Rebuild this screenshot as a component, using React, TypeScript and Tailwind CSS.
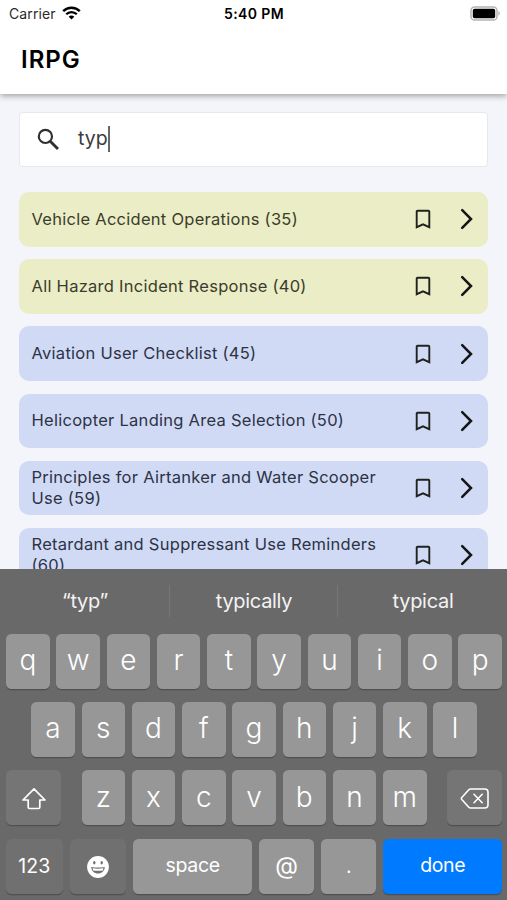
import type { ReactNode } from "react";

type Item = { title: string; tone: string; ink: string };

const GREEN = "bg-[#eaedc6]";
const BLUE = "bg-[#d1daf5]";

const items: Item[] = [
  { title: "Vehicle Accident Operations (35)", tone: GREEN, ink: "text-[#3b3c2b]" },
  { title: "All Hazard Incident Response (40)", tone: GREEN, ink: "text-[#3b3c2b]" },
  { title: "Aviation User Checklist (45)", tone: BLUE, ink: "text-[#2c3345]" },
  { title: "Helicopter Landing Area Selection (50)", tone: BLUE, ink: "text-[#2c3345]" },
  { title: "Principles for Airtanker and Water Scooper Use (59)", tone: BLUE, ink: "text-[#2c3345]" },
  { title: "Retardant and Suppressant Use Reminders (60)", tone: BLUE, ink: "text-[#2c3345]" },
];

function StatusBar() {
  return (
    <div className="grid h-7 grid-cols-3 items-center pl-[9px] pr-[6px] text-[14px] leading-none text-black">
      <div className="flex items-center gap-[6px]">
        <span className="tracking-[0.1px] text-[#2a2a2a]">Carrier</span>
        <svg width="19" height="14" viewBox="0 0 19 14" className="-mt-[2px]">
          <path d="M1.2 5.2a11.7 11.7 0 0 1 16.6 0" fill="none" stroke="#000" strokeWidth="2.5" />
          <path d="M4.2 8.3a7.5 7.5 0 0 1 10.6 0" fill="none" stroke="#000" strokeWidth="2.3" />
          <path d="M6.7 10.7a3.9 3.9 0 0 1 5.6 0L9.5 13.5z" fill="#000" />
        </svg>
      </div>
      <span className="-ml-[2px] text-center text-[14px] font-semibold tracking-[0.4px] whitespace-nowrap">5:40 PM</span>
      <svg width="31" height="15" viewBox="0 0 31 15" className="-mt-[2px] justify-self-end">
        <rect x="1" y="1" width="26" height="13" rx="3.6" fill="#fff" stroke="#b3b3b3" strokeWidth="1.5" />
        <rect x="2.8" y="2.8" width="22.4" height="9.4" rx="1.8" fill="#000" />
        <path d="M28.4 5.3c1.9.6 1.9 3.8 0 4.4z" fill="#b3b3b3" />
      </svg>
    </div>
  );
}

function Card({ item }: { item: Item }) {
  return (
    <div className={`flex h-[54.5px] shrink-0 items-center rounded-[10px] pl-[12.5px] ${item.tone}`}>
      <p className={`-mt-px w-[370px] text-[16.5px] leading-[20.5px] tracking-[0.27px] ${item.ink}`}>{item.title}</p>
      <svg width="16" height="20" viewBox="0 0 16 20" className="ml-[13px] shrink-0">
        <path d="M2.6 1.7h10.8q.9 0 .9.9v15.600L8 15.400l-6.300 2.800V2.600q0-.9.900-.9z" fill="none" stroke="#20221f" strokeWidth="1.900" />
      </svg>
      <svg width="14" height="22" viewBox="0 0 14 22" className="ml-[29px] shrink-0">
        <path d="M2.200 2.200 11 11l-8.800 8.800" fill="none" stroke="#151515" strokeWidth="2.500" strokeLinecap="round" strokeLinejoin="miter" />
      </svg>
    </div>
  );
}

function Key({ children, className = "w-[43.5px] bg-[#979797]" }: { children: ReactNode; className?: string }) {
  return (
    <div className={`flex h-[55px] shrink-0 items-center justify-center rounded-[5.5px] text-white shadow-[0_1.3px_0_#505050] ${className}`}>
      {children}
    </div>
  );
}

function Letters({ row }: { row: string }) {
  return (
    <div className="flex gap-[6.75px]">
      {row.split("").map((letter) => (
        <Key key={letter}>
          <span className="-mt-[2px] text-[28px] leading-none font-light">{letter}</span>
        </Key>
      ))}
    </div>
  );
}

function Keyboard() {
  return (
    <div className="h-[331px] shrink-0 bg-[#696969] text-white">
      <div className="grid h-[64.5px] grid-cols-3 items-center text-center text-[20px] tracking-[-0.3px] text-[#f3f3f3]">
        <span className="pl-px">“typ”</span>
        <span className="border-x border-[#777777] py-px pl-px">typically</span>
        <span className="pl-px">typical</span>
      </div>
      <div className="flex flex-col gap-[13.4px] pl-[6px] pr-[5px]">
        <div className="flex justify-center">
          <Letters row="qwertyuiop" />
        </div>
        <div className="flex justify-center">
          <Letters row="asdfghjkl" />
        </div>
        <div className="flex justify-between">
          <Key className="w-[55px] bg-[#757575]">
            <svg width="26" height="24" viewBox="0 0 26 24" className="mt-[3px]">
              <path d="M13 1.8 24 13h-5.2v7.2q0 1.3-1.3 1.3h-9q-1.3 0-1.3-1.3V13H2z" fill="none" stroke="#fff" strokeWidth="1.7" strokeLinejoin="round" />
            </svg>
          </Key>
          <Letters row="zxcvbnm" />
          <Key className="w-[55px] bg-[#757575]">
            <svg width="30" height="24" viewBox="0 0 30 24" className="mt-[3px]">
              <path d="M10.5 2h14.2q3.3 0 3.3 3.3v12.4q0 3.3-3.3 3.3H10.5q-1 0-1.7-.7L1.8 12.6q-.9-1.1 0-2.2L8.8 2.7Q9.5 2 10.5 2z" fill="none" stroke="#fff" strokeWidth="1.6" />
              <path d="m14 7.3 8.2 8.4m0-8.4L14 15.7" stroke="#fff" strokeWidth="1.6" strokeLinecap="round" />
            </svg>
          </Key>
        </div>
        <div className="flex justify-between text-[19.5px]">
          <Key className="w-[56.5px] bg-[#707070]">
            <span className="mt-px">123</span>
          </Key>
          <Key className="w-[56.5px] bg-[#707070]">
            <svg width="24" height="24" viewBox="0 0 24 24" className="mt-px">
              <circle cx="12" cy="12" r="10.9" fill="#fff" />
              <ellipse cx="8.3" cy="7.8" rx="1.2" ry="1.8" fill="#707070" />
              <ellipse cx="15.7" cy="7.8" rx="1.2" ry="1.8" fill="#707070" />
              <path d="M5.2 12q6.8 1.2 13.6 0c-.2 4-3 6.5-6.8 6.5S5.4 16 5.2 12z" fill="#707070" />
              <path d="M6.5 13.3q5.5.9 11 0l-.6 2.100q-4.900.8-9.800 0z" fill="#fff" />
            </svg>
          </Key>
          <Key className="w-[118.5px] bg-[#979797]">
            <span className="-mt-[2px] tracking-[-0.3px]">space</span>
          </Key>
          <Key className="w-[55px] bg-[#979797]">
            <span className="-mt-px text-[23.5px] leading-none">@</span>
          </Key>
          <Key className="w-[55px] bg-[#979797]">.</Key>
          <Key className="w-[118.5px] bg-[#007aff]">
            <span className="-mt-[2px] tracking-[-0.4px]">done</span>
          </Key>
        </div>
      </div>
    </div>
  );
}

export default function App() {
  return (
    <div className="flex h-[900px] w-[507px] flex-col overflow-hidden bg-[#f3f5fa] font-[Inter,'Liberation_Sans',sans-serif]">
      <header className="z-10 h-[94px] shrink-0 bg-white shadow-[0_2px_6px_rgba(0,0,0,0.35)]">
        <StatusBar />
        <h1 className="pl-[21px] pt-[14px] text-[24px] leading-9 font-semibold tracking-[1px] text-black">IRPG</h1>
      </header>
      <main className="flex h-[475px] shrink-0 flex-col overflow-hidden px-[19px] pt-[18px]">
        <div className="flex h-[55px] shrink-0 items-center rounded-[4px] border border-[#e7e8eb] bg-white pl-[17px]">
          <svg width="24" height="24" viewBox="0 0 24 24">
            <circle cx="8.4" cy="8.4" r="6.6" fill="none" stroke="#303030" strokeWidth="2.2" />
            <path d="m13.2 13.2 7.8 7.8" stroke="#303030" strokeWidth="2.9" />
          </svg>
          <span className="-mt-px ml-[17px] text-[19.5px] text-[#3c3c3c]">typ</span>
          <span className="-mt-[2px] h-[26px] w-[2px] bg-[#666]" />
        </div>
        <div className="flex flex-col gap-[12.7px] pt-[25px]">
          {items.map((item) => (
            <Card key={item.title} item={item} />
          ))}
        </div>
      </main>
      <Keyboard />
    </div>
  );
}
